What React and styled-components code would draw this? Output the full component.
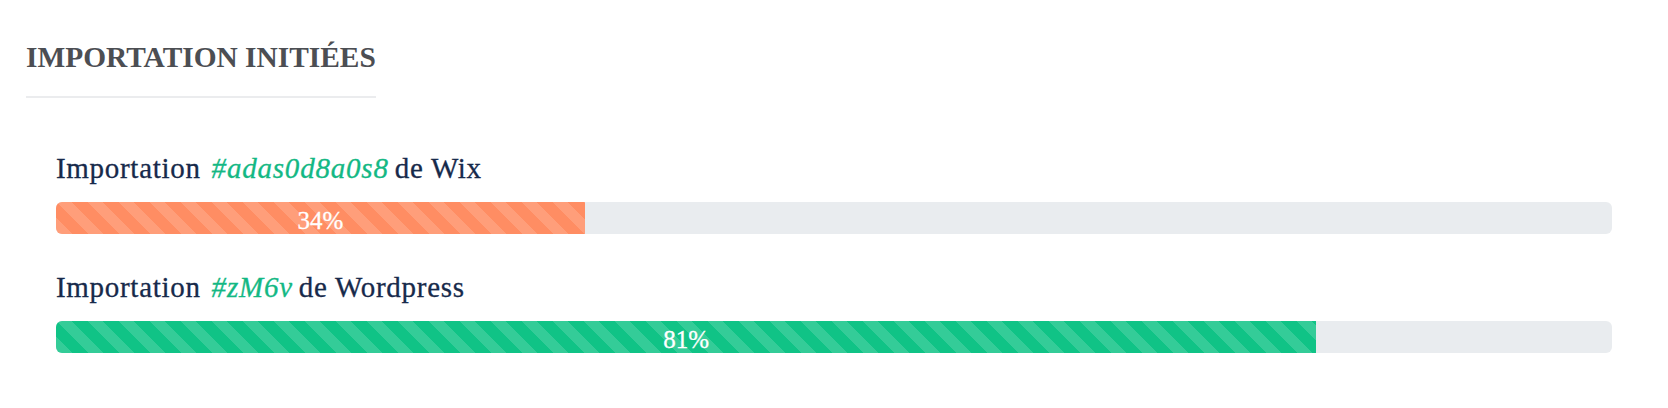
import React from "react";
import styled, { createGlobalStyle } from "styled-components";

const GlobalStyle = createGlobalStyle`
  html, body {
    margin: 0;
    padding: 0;
    background: #ffffff;
  }
  body {
    font-family: "Liberation Serif", "Times New Roman", serif;
  }
`;

const Page = styled.section`
  padding: 40px 56px 40px 26px;
`;

const Header = styled.header`
  display: flex;
`;

const Title = styled.h2`
  margin: 0;
  padding-bottom: 21px;
  border-bottom: 2px solid #ebecee;
  font-family: "Liberation Serif", "Times New Roman", serif;
  font-weight: 700;
  font-size: 29.4px;
  line-height: 35px;
  color: #4c4e53;
`;

const List = styled.div`
  display: flex;
  flex-direction: column;
  gap: 35px;
  padding: 52px 0 0 30px;
`;

const Item = styled.div`
  display: flex;
  flex-direction: column;
  gap: 16px;
`;

const Label = styled.div`
  font-size: 29px;
  line-height: 36px;
  color: #172a4b;
  letter-spacing: 0.7px;
  white-space: nowrap;
  -webkit-text-stroke: 0.3px currentColor;
`;

const Ref = styled.em`
  font-style: italic;
  color: #13b884;
  letter-spacing: 0.8px;
  margin-left: 3px;
  margin-right: -2px;
`;

const Track = styled.div`
  height: 32px;
  border-radius: 6px;
  background: #e9ecef;
  overflow: hidden;
  display: flex;
`;

const Fill = styled.div`
  height: 100%;
  background-color: ${(p) => p.$color};
  background-image: linear-gradient(
    45deg,
    rgba(255, 255, 255, 0.15) 25%,
    transparent 25%,
    transparent 50%,
    rgba(255, 255, 255, 0.15) 50%,
    rgba(255, 255, 255, 0.15) 75%,
    transparent 75%,
    transparent
  );
  background-size: 31px 31px;
  color: #ffffff;
  font-size: 25px;
  line-height: 37px;
  text-align: center;
  white-space: nowrap;
  -webkit-text-stroke: 0.3px currentColor;
`;

const imports = [
  { id: "#adas0d8a0s8", source: "Wix", value: 34, color: "#ff8d63" },
  { id: "#zM6v", source: "Wordpress", value: 81, color: "#10c386" },
];

export default function App() {
  return (
    <>
      <GlobalStyle />
      <Page>
        <Header>
          <Title>IMPORTATION INITIÉES</Title>
        </Header>
        <List>
          {imports.map((imp) => (
            <Item key={imp.id}>
              <Label>
                Importation <Ref>{imp.id}</Ref> de {imp.source}
              </Label>
              <Track>
                <Fill $color={imp.color} style={{ width: `${imp.value}%` }}>
                  {imp.value}%
                </Fill>
              </Track>
            </Item>
          ))}
        </List>
      </Page>
    </>
  );
}
